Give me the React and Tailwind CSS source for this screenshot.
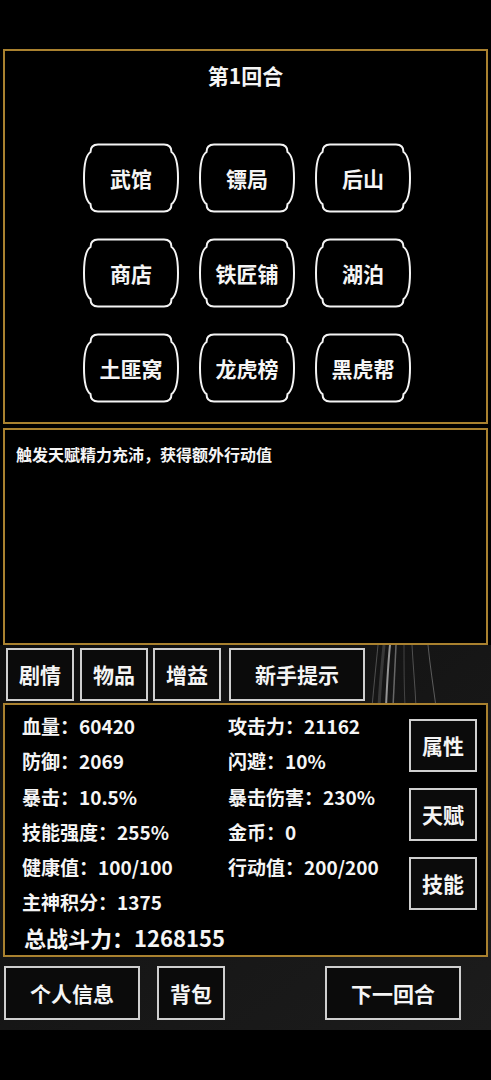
import React from 'react';

const places = ['武馆', '镖局', '后山', '商店', '铁匠铺', '湖泊', '土匪窝', '龙虎榜', '黑虎帮'];

const stats = [
  ['血量：60420', '攻击力：21162'],
  ['防御：2069', '闪避：10%'],
  ['暴击：10.5%', '暴击伤害：230%'],
  ['技能强度：255%', '金币：0'],
  ['健康值：100/100', '行动值：200/200'],
  ['主神积分：1375', ''],
];

// scalloped frame used by the map buttons
function PlaceButton({ label }) {
  return (
    <button className="relative w-[96px] h-[70px] flex items-center justify-center">
      <svg className="absolute inset-0" width="96" height="70" viewBox="0 0 96 70" fill="none">
        <path
          d="M15 1.5 H81 C86 1.5 88.5 4 88.5 9 C93 12 95 22 95 35 C95 48 93 58 88.5 61 C88.5 66 86 68.5 81 68.5 H15 C10 68.5 7.5 66 7.5 61 C3 58 1 48 1 35 C1 22 3 12 7.5 9 C7.5 4 10 1.5 15 1.5 Z"
          stroke="#f4f4f4"
          strokeWidth="2"
        />
      </svg>
      <span className="relative text-[21px] font-bold leading-none">{label}</span>
    </button>
  );
}

function BoxButton({ label, className = '' }) {
  return (
    <button
      className={`h-[53px] border-2 border-[#cfcfcf] bg-[#0b0b0b] flex items-center justify-center text-[21px] font-bold leading-none ${className}`}
    >
      {label}
    </button>
  );
}

export default function App() {
  return (
    <div className="w-[491px] min-h-[1080px] bg-black text-[#f5f5f5] font-['Noto_Sans_CJK_SC','Noto_Sans',sans-serif]">
      <div className="pt-[49px] px-[3px]">
        {/* round + map */}
        <div className="h-[375px] border-[2.5px] border-[#a9812f] bg-black flex flex-col items-center">
          <div className="mt-[10px] text-[21px] font-bold leading-[28px]">第1回合</div>
          <div className="mt-[54px] ml-[3px] grid grid-cols-[repeat(3,96px)] gap-x-[20px] gap-y-[25px]">
            {places.map((p) => (
              <PlaceButton key={p} label={p} />
            ))}
          </div>
        </div>

        {/* event log */}
        <div className="mt-[4px] h-[217px] border-[2.5px] border-[#a9812f] bg-black px-[11px] pt-[13px]">
          <p className="text-[16px] font-bold leading-[22px]">触发天赋精力充沛，获得额外行动值</p>
        </div>
      </div>

      <div className="relative bg-gradient-to-br from-[#0e0e0e] via-[#161616] to-[#1c1c1c] pb-[10px]">
        {/* background streaks */}
        <svg className="absolute left-[360px] top-0" width="100" height="62" viewBox="0 0 100 62" fill="none">
          <path d="M18 0 C16 20 14 40 12 62" stroke="#ffffff" strokeOpacity="0.25" strokeWidth="1" />
          <path d="M30 0 C28 20 27 40 26 62" stroke="#ffffff" strokeOpacity="0.55" strokeWidth="2" />
          <path d="M36 0 C35 20 34 40 33 62" stroke="#ffffff" strokeOpacity="0.35" strokeWidth="1.5" />
          <path d="M44 0 C44 20 44 40 45 62" stroke="#ffffff" strokeOpacity="0.2" strokeWidth="1" />
          <path d="M52 0 C53 20 55 40 56 62" stroke="#ffffff" strokeOpacity="0.25" strokeWidth="1" />
          <path d="M68 0 C70 20 73 40 76 62" stroke="#ffffff" strokeOpacity="0.3" strokeWidth="1" />
          <path d="M24 0 C22 20 20 40 19 62" stroke="#ffffff" strokeOpacity="0.15" strokeWidth="3" />
        </svg>

        {/* tabs */}
        <div className="relative flex pt-[3px]">
          <BoxButton label="剧情" className="ml-[6px] w-[68px]" />
          <BoxButton label="物品" className="ml-[6px] w-[68px]" />
          <BoxButton label="增益" className="ml-[5px] w-[68px]" />
          <BoxButton label="新手提示" className="ml-[8px] w-[136px]" />
        </div>

        {/* stats */}
        <div className="relative mt-[2px] mx-[3px] h-[254px] border-[2.5px] border-[#a9812f] bg-black flex">
          <div className="flex-1 pl-[17px] pt-[3px]">
            <div className="grid grid-cols-[206px_1fr] text-[19px] font-bold leading-[35.3px]">
              {stats.map(([a, b], i) => (
                <React.Fragment key={i}>
                  <div>{a}</div>
                  <div>{b}</div>
                </React.Fragment>
              ))}
            </div>
            <div className="ml-[2px] text-[22px] font-bold leading-[34px]">总战斗力：1268155</div>
          </div>
          <div className="mr-[9px] pt-[14px] flex flex-col gap-[16px]">
            <BoxButton label="属性" className="w-[68px]" />
            <BoxButton label="天赋" className="w-[68px]" />
            <BoxButton label="技能" className="w-[68px]" />
          </div>
        </div>

        {/* bottom actions */}
        <div className="relative mt-[9px] flex">
          <BoxButton label="个人信息" className="ml-[4px] w-[136px] h-[54px]" />
          <BoxButton label="背包" className="ml-[17px] w-[68px] h-[54px]" />
          <BoxButton label="下一回合" className="ml-[100px] w-[136px] h-[54px]" />
        </div>
      </div>
    </div>
  );
}
